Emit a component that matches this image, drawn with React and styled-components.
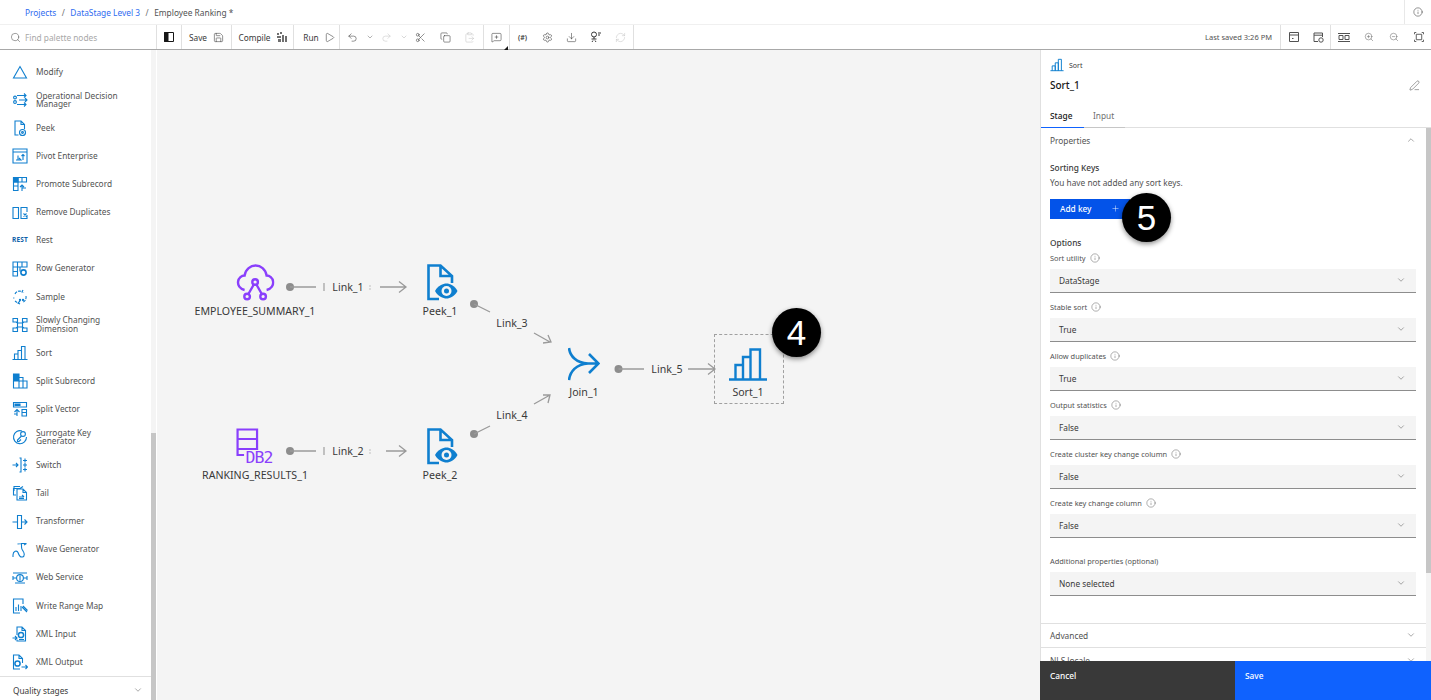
import React from 'react';
import styled, { createGlobalStyle } from 'styled-components';
import {
  Search, Save, Play, Undo2, Redo2, ChevronDown, ChevronUp, Scissors, Copy, ClipboardPaste,
  MessageSquarePlus, Settings, Download, RefreshCw, ZoomIn, ZoomOut, Info, PenLine, Plus,
} from 'lucide-react';

const GlobalStyle = createGlobalStyle`
  html, body { margin: 0; padding: 0; background: #fff; }
  body { font-family: "Noto Sans", Roboto, "Liberation Sans", sans-serif; color: #393939; }
`;

const Page = styled.div`
  position: relative;
  width: 1431px;
  height: 700px;
  overflow: hidden;
  display: flex;
  flex-direction: column;
`;

const TopBar = styled.div`
  height: 25px;
  box-sizing: border-box;
  display: flex;
  align-items: center;
  justify-content: space-between;
  padding-left: 25px;
  border-bottom: 1px solid #f0f0f0;
  flex: none;
`;
const Crumbs = styled.div`
  display: flex;
  gap: 5.5px;
  font-size: 8.35px;
  color: #525252;
`;
const CrumbLink = styled.span`color: #2f6bf0;`;
const CrumbSep = styled.span`color: #6f6f6f;`;
const InfoCell = styled.div`
  width: 26px;
  height: 24px;
  border-left: 1px solid #e8e8e8;
  display: flex;
  align-items: center;
  justify-content: center;
  color: #393939;
`;

const Toolbar = styled.div`
  height: 25px;
  box-sizing: border-box;
  flex: none;
  display: flex;
  align-items: stretch;
  border-bottom: 1px solid #a8a8a8;
  font-size: 8.3px;
`;
const SearchBox = styled.div`
  width: 157px;
  box-sizing: border-box;
  display: flex;
  align-items: center;
  gap: 4px;
  padding-left: 10px;
  border-right: 1px solid #e0e0e0;
  color: #a8a8a8;
  svg { color: #525252; }
`;
const ToolGroup = styled.div`
  display: flex;
  align-items: center;
  box-sizing: border-box;
  width: ${(props) => props.$width}px;
  border-right: ${(props) => (props.$open ? 'none' : '1px solid #e0e0e0')};
  border-left: ${(props) => (props.$lead ? '1px solid #e0e0e0' : 'none')};
`;
const ToolText = styled.div`
  display: flex;
  align-items: center;
  justify-content: center;
  box-sizing: border-box;
  gap: ${(props) => props.$gap || 6}px;
  padding-left: ${(props) => props.$pad || 0}px;
  width: 100%;
  color: #393939;
`;
const ToolIcon = styled.div`
  position: relative;
  width: ${(props) => props.$width || 24.5}px;
  flex: none;
  display: flex;
  align-items: center;
  justify-content: center;
  color: ${(props) => (props.$off ? '#c6c6c6' : '#393939')};
`;
const VarsMark = styled.span`
  font-size: 7px;
  font-weight: 600;
`;
const CornerMark = styled.span`
  position: absolute;
  right: 1px;
  bottom: -7px;
  width: 0;
  height: 0;
  border-left: 4px solid transparent;
  border-bottom: 4px solid #161616;
`;
const Spacer = styled.div`flex: 1;`;
const SavedText = styled.div`
  display: flex;
  align-items: center;
  padding-right: 8px;
  font-size: 7.5px;
  color: #525252;
`;

const Main = styled.div`
  flex: 1;
  min-height: 0;
  display: flex;
`;

const Palette = styled.div`
  width: 157px;
  flex: none;
  display: flex;
`;
const PaletteColumn = styled.div`
  width: 151px;
  display: flex;
  flex-direction: column;
`;
const PaletteList = styled.div`
  flex: 1;
  min-height: 0;
  padding-top: 8px;
  overflow: hidden;
`;
const PaletteItem = styled.div`
  height: 28.1px;
  display: flex;
  align-items: center;
  gap: 8px;
  padding-left: 12px;
  font-size: 8.3px;
  line-height: 8.5px;
  color: #525252;
  svg { flex: none; }
`;
const RestMark = styled.span`
  width: 20px;
  margin-right: -4px;
  flex: none;
  font-size: 6.5px;
  font-weight: 700;
  letter-spacing: 0.2px;
  color: #0f5fa8;
`;
const PaletteFooter = styled.div`
  height: 24px;
  flex: none;
  box-sizing: border-box;
  border-top: 1px solid #e0e0e0;
  display: flex;
  align-items: center;
  justify-content: space-between;
  padding: 3px 8px 0 13px;
  font-size: 8.3px;
  color: #393939;
`;
const ScrollTrack = styled.div`
  width: 5px;
  flex: none;
  background: #f4f4f4;
  display: flex;
  flex-direction: column;
  justify-content: ${(props) => (props.$end ? 'flex-end' : 'flex-start')};
`;
const ScrollThumb = styled.div`
  height: ${(props) => props.$height}px;
  background: #c6c6c6;
`;

const Canvas = styled.div`
  position: relative;
  flex: 1;
  background: #f4f4f4;
`;
const LinkLayer = styled.svg`
  position: absolute;
  inset: 0;
  width: 100%;
  height: 100%;
`;
const StageNode = styled.div`
  position: absolute;
  left: ${(props) => props.$x}px;
  top: ${(props) => props.$y}px;
  transform: translateX(-50%);
  display: flex;
  flex-direction: column;
  align-items: center;
  gap: ${(props) => props.$gap || 3}px;
  font-size: 10.6px;
  line-height: 14px;
  white-space: nowrap;
  color: #393939;
`;
const LinkLabel = styled.div`
  position: absolute;
  left: ${(props) => props.$x}px;
  top: ${(props) => props.$y}px;
  transform: translate(-50%, -50%);
  font-size: 10.6px;
  white-space: nowrap;
  color: #393939;
`;
const Selection = styled.div`
  position: absolute;
  left: 557px;
  top: 284px;
  width: 70px;
  height: 70px;
  box-sizing: border-box;
  border: 1px dashed #a0a0a0;
`;
const Badge = styled.div`
  position: absolute;
  left: ${(props) => props.$x}px;
  top: ${(props) => props.$y}px;
  width: 49px;
  height: 49px;
  border-radius: 50%;
  background: #000;
  color: #fff;
  display: flex;
  align-items: center;
  justify-content: center;
  font-family: "Liberation Sans", sans-serif;
  font-size: 35px;
  box-shadow: 0 2px 5px rgba(0, 0, 0, 0.45);
`;

const Inspector = styled.div`
  width: 391px;
  flex: none;
  box-sizing: border-box;
  border-left: 1px solid #e0e0e0;
  display: flex;
  flex-direction: column;
  background: #fff;
`;
const InspectorHead = styled.div`
  height: 53px;
  flex: none;
  box-sizing: border-box;
  padding: 8px 11px 0 9px;
`;
const KindRow = styled.div`
  display: flex;
  align-items: center;
  gap: 5px;
  font-size: 7px;
  color: #393939;
`;
const NameRow = styled.div`
  display: flex;
  align-items: center;
  justify-content: space-between;
  margin-top: 6px;
  font-size: 10px;
  font-weight: 500;
  color: #161616;
  svg { color: #525252; }
`;
const Tabs = styled.div`
  height: 24px;
  flex: none;
  display: flex;
  border-bottom: 1px solid #e0e0e0;
`;
const Tab = styled.div`
  width: ${(props) => props.$width}px;
  box-sizing: border-box;
  margin-bottom: -1px;
  display: flex;
  align-items: center;
  padding-left: ${(props) => props.$pad}px;
  font-size: 8.3px;
  font-weight: ${(props) => (props.$active ? 500 : 400)};
  color: ${(props) => (props.$active ? '#161616' : '#6f6f6f')};
  border-bottom: 1px solid ${(props) => (props.$active ? '#0f62fe' : '#c6c6c6')};
`;
const InspectorBody = styled.div`
  flex: 1;
  min-height: 0;
  display: flex;
  overflow: hidden;
`;
const BodyContent = styled.div`
  flex: 1;
  min-width: 0;
`;
const AccordionHead = styled.div`
  height: 24.5px;
  box-sizing: border-box;
  display: flex;
  align-items: center;
  justify-content: space-between;
  padding: 0 10px 0 9px;
  font-size: 8.3px;
  color: #525252;
  border-bottom: ${(props) => (props.$line ? '1px solid #e0e0e0' : 'none')};
  svg { color: #525252; }
`;
const PropertyPane = styled.div`
  padding: 9px 10px 0 9px;
  height: 471px;
  box-sizing: border-box;
  border-bottom: 1px solid #e0e0e0;
`;
const GroupTitle = styled.div`
  font-size: 8.3px;
  font-weight: 500;
  line-height: 12px;
  color: #393939;
`;
const HelpText = styled.div`
  font-size: 8.3px;
  line-height: 12px;
  margin-top: 3px;
  color: #525252;
`;
const AddButton = styled.div`
  width: 80px;
  height: 20px;
  margin: 10px 0 18px;
  box-sizing: border-box;
  padding: 0 10px 0 10px;
  display: flex;
  align-items: center;
  justify-content: space-between;
  background: #0353e9;
  color: #fff;
  font-size: 8.3px;
  font-weight: 500;
`;
const Field = styled.div`
  margin-top: ${(props) => props.$gap || 0}px;
`;
const FieldLabel = styled.div`
  height: 12px;
  display: flex;
  align-items: center;
  gap: 4px;
  font-size: 7.4px;
  color: #525252;
  svg { color: #525252; }
`;
const SelectBox = styled.div`
  height: 24px;
  margin-top: 5px;
  box-sizing: border-box;
  padding: 0 10px 0 9px;
  display: flex;
  align-items: center;
  justify-content: space-between;
  background: #f4f4f4;
  border-bottom: 1px solid #8d8d8d;
  font-size: 8.3px;
  color: #393939;
  svg { color: #525252; }
`;
const ActionRow = styled.div`
  height: 39px;
  flex: none;
  display: flex;
  margin-left: -1px;
`;
const ActionButton = styled.div`
  flex: ${(props) => (props.$primary ? '1' : '0 0 195px')};
  box-sizing: border-box;
  padding: 9px 10px;
  font-size: 8.3px;
  font-weight: 500;
  color: #fff;
  background: ${(props) => (props.$primary ? '#0f62fe' : '#393939')};
`;

const BLUE = '#0f7fcf';

const Glyph = ({ size = 16, color = BLUE, width = 1.1, fill = 'none', view = 16, children }) => (
  <svg width={size} height={size} viewBox={`0 0 ${view} ${view}`} fill={fill} stroke={color} strokeWidth={width} strokeLinejoin="miter">
    {children}
  </svg>
);

const SortBars = (props) => (
  <Glyph {...props}>
    <path d="M0.5 14.5H15.5M2.5 14.5V9H6V14.5M6 14.5V5.5H9.5V14.5M9.5 14.5V1.5H13V14.5" />
  </Glyph>
);

const paletteIcons = {
  modify: <Glyph><path d="M1.5 14H14.5L8 2.5Z" /></Glyph>,
  odm: <Glyph><path d="M5 3.5H14M12 1.5L14 3.5L12 5.5M7 8H15M13 6L15 8L13 10M5 12.5H14M12 10.5L14 12.5L12 14.5" /><circle cx="3" cy="5.5" r="1.4" /><circle cx="3" cy="10" r="1.4" /></Glyph>,
  peek: <Glyph><path d="M6.5 15H3V1H9L12.5 4.5V9M9 1V4.5H12.5" /><circle cx="10.5" cy="12.5" r="3" /><circle cx="10.5" cy="12.5" r="0.9" /></Glyph>,
  pivot: <Glyph><path d="M1 1H15V15H1ZM1 4H15M6 12V7.5M4 12H9L7 10M11 12V6.5M9.5 8L11 6.5L12.5 8" /></Glyph>,
  promote: <Glyph><path d="M1.5 1.5H14.5V6H1.5ZM6 1.5V14.5H1.5V1.5M1.5 6H6M1.5 10H6M10 1.5V6M10 15V9M8 11L10 9L12 11M10 12H14" /><path d="M1.5 1.5H6V6H1.5Z" fill={BLUE} /></Glyph>,
  remove: <Glyph><path d="M1 2.5H6.5V13.5H1ZM15 7V2.5H9V13.5H15V10M11.5 8.5L14.5 11.5M14.5 8.5L11.5 11.5" /></Glyph>,
  row: <Glyph><path d="M1 1H15V6H1ZM5.5 1V6M10 1V6M1 6V15H5.5V6M1 10.5H5.5M8 10.5V6" /><circle cx="11.5" cy="11.5" r="2.6" strokeWidth="1.6" /></Glyph>,
  sample: <Glyph><path d="M3 5C4 2.5 7 1.5 9.5 2.5M14 7C14.5 10 13 12.5 10.5 13.5M5 13.5L3 12M1.8 8.5V9.5M11 1L10 3L12 3.5" strokeDasharray="3 1" /><path d="M8 12L6 14L8 15" /><circle cx="8" cy="11" r="0.6" /><circle cx="11" cy="11" r="0.6" /></Glyph>,
  slowly: <Glyph><path d="M1 1.5H5.5V5H1ZM10.5 1.5H15V5H10.5ZM1 11H5.5V14.5H1ZM10.5 11H15V14.5H10.5ZM5.5 6H10.5V10H5.5ZM4 5L5.5 6M12 5L10.5 6M4 11L5.5 10M12 11L10.5 10" /></Glyph>,
  sort: <SortBars />,
  splitSub: <Glyph><path d="M1.5 1H7V8H1.5Z" fill={BLUE} /><path d="M1.5 8V15H7V8H15V15H7M11 8V15M7 4.5H11V8" /></Glyph>,
  splitVec: <Glyph><path d="M1.5 1.5H14.5V6H1.5Z" /><path d="M3 3H8V4.5H3Z" fill={BLUE} /><path d="M5 15V9M2.5 11L5 8.5L7.5 11M5 13H2M10 8.5H14.5V15H10ZM10 11.5H14.5" /></Glyph>,
  surrogate: <Glyph><path d="M10 2A6.5 6.5 0 1 0 14.5 8" /><circle cx="11" cy="5" r="2.4" /><path d="M9.5 7L5.5 11V12.5H7L9 10.5" /></Glyph>,
  switchNode: <Glyph><path d="M0.5 8H6M4 6L6 8L4 10M7.5 1H9V15H7.5M11 3.5H15M13 1.5V5.5M11 8H15M13 6V10M11 12.5H15M13 10.5V14.5" /></Glyph>,
  tail: <Glyph><path d="M2 6V1.5H8M4 10H1.5V3.5H8L11 1.5M5 4H11L14.5 7.5V15H5ZM11 4V7.5H14.5M7 12H12M10 10L12 12M7 13.5H12" /></Glyph>,
  transformer: <Glyph><path d="M0.5 8H5M5.5 1.5H9.5V14.5H5.5ZM9.5 8H15M12.5 5.5L15 8L12.5 10.5" /></Glyph>,
  wave: <Glyph><path d="M1 15V13C1 9 5 8 6 10.5C7 13.5 8 15.5 10.5 15C13 14.5 12.5 11 11 9C10 8 9.5 7 9.5 5V1.5H14.5M12 3L14.5 1.5M5.5 2L9.5 1.5" /></Glyph>,
  web: <Glyph><path d="M1 3H15M3 13H13M1 6V10M15 6V10" /><circle cx="8" cy="8" r="3.4" /><path d="M8 5.5V10.5M1 8H4.5M11.5 8H15" /></Glyph>,
  range: <Glyph><path d="M8 15H1.5V1H11V6M4 13V9M6.5 13V6.5M9 13V8" /><path d="M10 9L15 14M11 8L15.5 12.5" /></Glyph>,
  xmlIn: <Glyph><path d="M5 9V1H10L13.5 4.5V15H5V13.5M10 1V4.5H13.5" /><circle cx="9" cy="9" r="2.6" strokeWidth="1.5" /><path d="M0.5 12H5M3 10L5 12L3 14M7 13.5H12" /></Glyph>,
  xmlOut: <Glyph><path d="M8 15H1.5V1H7L10.5 4.5V9M7 1V4.5H10.5" /><circle cx="5.5" cy="9.5" r="2.6" strokeWidth="1.5" /><path d="M9.5 13H15.5M13.5 11L15.5 13L13.5 15" /></Glyph>,
};

const paletteItems = [
  ['modify', 'Modify'],
  ['odm', <>Operational Decision<br />Manager</>],
  ['peek', 'Peek'],
  ['pivot', 'Pivot Enterprise'],
  ['promote', 'Promote Subrecord'],
  ['remove', 'Remove Duplicates'],
  ['rest', 'Rest'],
  ['row', 'Row Generator'],
  ['sample', 'Sample'],
  ['slowly', <>Slowly Changing<br />Dimension</>],
  ['sort', 'Sort'],
  ['splitSub', 'Split Subrecord'],
  ['splitVec', 'Split Vector'],
  ['surrogate', <>Surrogate Key<br />Generator</>],
  ['switchNode', 'Switch'],
  ['tail', 'Tail'],
  ['transformer', 'Transformer'],
  ['wave', 'Wave Generator'],
  ['web', 'Web Service'],
  ['range', 'Write Range Map'],
  ['xmlIn', 'XML Input'],
  ['xmlOut', 'XML Output'],
];

const fields = [
  ['Sort utility', 'DataStage'],
  ['Stable sort', 'True'],
  ['Allow duplicates', 'True'],
  ['Output statistics', 'False'],
  ['Create cluster key change column', 'False'],
  ['Create key change column', 'False'],
];

const ICON = { size: 11, strokeWidth: 1.2 };

// the extra room on the left keeps the sheet a little right of the label, as in the flow
const PeekIcon = () => (
  <svg width="36" height="37" viewBox="-4 0 36 37" fill="none">
    <path d="M13 35H2.5V1.5H14.5L26 12V19M14.5 1.5V12H26" stroke="#0f7fcf" strokeWidth="2.6" />
    <path d="M9 27C12 21.5 17 19.5 20.5 19.5C24 19.5 28.5 21.5 31.5 27C28.5 32.5 24 34.5 20.5 34.5C17 34.5 12 32.5 9 27Z" fill="#0f7fcf" />
    <circle cx="20.5" cy="27" r="5" fill="#f4f4f4" />
    <circle cx="20.5" cy="27" r="2.5" fill="#0f7fcf" />
  </svg>
);

const CloudIcon = () => (
  <svg width="40" height="37" viewBox="-2 0 40 37" fill="none" stroke="#8a3ffc" strokeWidth="2.4">
    <path d="M8 26C3 25 1 21 1.5 17.5C2 14 5 11.5 8 11.5C9 5 14 1.5 19 1.5C24 1.5 29 5 30 11.5C33 11.5 36 14 36.5 17.5C37 21 35 25 30 26" />
    <circle cx="18.5" cy="18" r="2.8" />
    <circle cx="10.5" cy="32.5" r="2.8" />
    <circle cx="26.5" cy="32.5" r="2.8" />
    <path d="M17.2 20.5L11.8 30M19.8 20.5L25.2 30" />
  </svg>
);

const Db2Icon = () => (
  <svg width="38" height="37" viewBox="0 0 38 37" fill="none" stroke="#8a3ffc" strokeWidth="2.2" overflow="visible">
    <path d="M8 27H1.5V1.5H21V21H1.5M1.5 11H21" />
    <text x="9.5" y="35" fontFamily="DejaVu Sans Mono, monospace" fontSize="16.5" fill="#8a3ffc" stroke="none" letterSpacing="-1">DB2</text>
  </svg>
);

const JoinIcon = () => (
  <svg width="32" height="34" viewBox="0 0 32 34" fill="none" stroke="#0f7fcf" strokeWidth="2.6">
    <path d="M1 1C2 9 8 16 20 16.5H30M1 33C2 25 8 17 20 16.5M21 7L30.5 16.5L21 26" />
  </svg>
);

const SortStageIcon = () => (
  <svg width="38" height="33" viewBox="0 0 38 33" fill="none" stroke="#0f7fcf" strokeWidth="2.4">
    <path d="M0 31.5H38M6.5 31.5V17H14V31.5M14 31.5V9H21.5V31.5M21.5 31.5V1.5H31V31.5" />
  </svg>
);

const App = () => (
  <Page>
    <GlobalStyle />
    <TopBar>
      <Crumbs>
        <CrumbLink>Projects</CrumbLink>
        <CrumbSep>/</CrumbSep>
        <CrumbLink>DataStage Level 3</CrumbLink>
        <CrumbSep>/</CrumbSep>
        <span>Employee Ranking *</span>
      </Crumbs>
      <InfoCell><Info size={10} strokeWidth={1.3} /></InfoCell>
    </TopBar>

    <Toolbar>
      <SearchBox><Search {...ICON} />Find palette nodes</SearchBox>
      <ToolGroup $width={25}>
        <ToolIcon>
          <svg width="10" height="10" viewBox="0 0 10 10" fill="none" stroke="#161616">
            <path d="M0.5 0.5H9.5V9.5H0.5Z" />
            <path d="M0.5 0.5H4V9.5H0.5Z" fill="#161616" />
          </svg>
        </ToolIcon>
      </ToolGroup>
      <ToolGroup $width={50}><ToolText>Save <Save {...ICON} /></ToolText></ToolGroup>
      <ToolGroup $width={62}>
        <ToolText>
          Compile
          <svg width="10" height="10" viewBox="0 0 10 10" fill="#6f6f6f">
            <path d="M0 1H2V3H0ZM3 0H5V2H3ZM0 4H4V6H0ZM1 7H4V10H1ZM5 3H7V10H5ZM8 4H10V10H8Z" />
          </svg>
        </ToolText>
      </ToolGroup>
      <ToolGroup $width={46}><ToolText $gap={5} $pad={5}>Run <Play {...ICON} /></ToolText></ToolGroup>
      <ToolGroup $width={144}>
        <ToolIcon $width={25}><Undo2 {...ICON} /></ToolIcon>
        <ToolIcon $width={9} $off><ChevronDown size={8} color="#8d8d8d" /></ToolIcon>
        <ToolIcon $width={25} $off><Redo2 {...ICON} /></ToolIcon>
        <ToolIcon $width={9} $off><ChevronDown size={8} /></ToolIcon>
        <ToolIcon $width={25}><Scissors {...ICON} /></ToolIcon>
        <ToolIcon><Copy {...ICON} /></ToolIcon>
        <ToolIcon $off><ClipboardPaste {...ICON} /></ToolIcon>
      </ToolGroup>
      <ToolGroup $width={26}>
        <ToolIcon $width={25}><MessageSquarePlus {...ICON} /><CornerMark /></ToolIcon>
      </ToolGroup>
      <ToolGroup $width={124}>
        <ToolIcon $width={25}><VarsMark>(#)</VarsMark></ToolIcon>
        <ToolIcon><Settings {...ICON} /></ToolIcon>
        <ToolIcon><Download {...ICON} /></ToolIcon>
        <ToolIcon>
          <svg width="12" height="12" viewBox="0 0 12 12" fill="none" stroke="#393939">
            <circle cx="4" cy="3.5" r="2.5" />
            <path d="M4 6V8M1.5 8H6.5M2 11L3 9.5M6 11L5 9.5M8 2H11M8 4H10" />
          </svg>
        </ToolIcon>
        <ToolIcon $off><RefreshCw {...ICON} /></ToolIcon>
      </ToolGroup>
      <Spacer />
      <SavedText>Last saved 3:26 PM</SavedText>
      <ToolGroup $width={51} $lead>
        <ToolIcon $width={25}>
          <svg width="10" height="10" viewBox="0 0 10 10" fill="none" stroke="#525252">
            <path d="M0.5 0.5H9.5V9.5H0.5ZM0.5 3H9.5M3 6.5H4.5" />
          </svg>
        </ToolIcon>
        <ToolIcon $width={25}>
          <svg width="11" height="11" viewBox="0 0 11 11" fill="none" stroke="#525252">
            <path d="M5 9.5H1V1H9.5V5M1 3.2H9.5" />
            <circle cx="8" cy="8" r="2.2" />
          </svg>
        </ToolIcon>
      </ToolGroup>
      <ToolGroup $width={100} $open>
        <ToolIcon $width={25}>
          <svg width="12" height="9" viewBox="0 0 12 9" fill="none" stroke="#525252">
            <path d="M0 0.5H12M0 8.5H12M1 2.5H5V6.5H1ZM7 2.5H11V6.5H7Z" />
          </svg>
        </ToolIcon>
        <ToolIcon $width={25}><ZoomIn size={10} strokeWidth={1.1} color="#525252" /></ToolIcon>
        <ToolIcon $width={25}><ZoomOut size={10} strokeWidth={1.1} color="#525252" /></ToolIcon>
        <ToolIcon $width={25}>
          <svg width="10" height="10" viewBox="0 0 11 11" fill="none" stroke="#525252">
            <path d="M2.5 2.5H8.5V8.5H2.5Z" />
            <path d="M0.5 2.5V0.5H2.5M8.5 0.5H10.5V2.5M10.5 8.5V10.5H8.5M2.5 10.5H0.5V8.5" />
          </svg>
        </ToolIcon>
      </ToolGroup>
    </Toolbar>

    <Main>
      <Palette>
        <PaletteColumn>
          <PaletteList>
            {paletteItems.map(([key, label]) => (
              <PaletteItem key={key}>
                {key === 'rest' ? <RestMark>REST</RestMark> : paletteIcons[key]}
                <span>{label}</span>
              </PaletteItem>
            ))}
          </PaletteList>
          <PaletteFooter>Quality stages <ChevronDown size={10} strokeWidth={1.2} color="#525252" /></PaletteFooter>
        </PaletteColumn>
        <ScrollTrack $end><ScrollThumb $height={267} /></ScrollTrack>
      </Palette>

      <Canvas>
        <LinkLayer fill="none" stroke="#9a9a9a" strokeWidth="1.3">
          <g fill="#8d8d8d" stroke="none">
            <circle cx="133" cy="237" r="4" />
            <circle cx="133" cy="401" r="4" />
            <circle cx="317" cy="254" r="4" />
            <circle cx="317" cy="384" r="4" />
            <circle cx="461.5" cy="319" r="4" />
          </g>
          <path d="M133 237H159M223 237H249M242 231.5L249 237L242 242.5" />
          <path d="M133 401H159M229 401H249M242 395.5L249 401L242 406.5" />
          <path d="M317 254L333 262M377 283L393 292M386 293L394 292L391 285" />
          <path d="M317 384L333 376M377 354L393 345M386 345L393 345L391 353" />
          <path d="M461.5 319H487M531 319H558M551 313.5L558 319L551 324.5" />
          <path d="M167 233V241M213 235.5V236.5M213 238.5V239.5M167 397V405M213 399.5V400.5M213 402.5V403.5" strokeWidth="1" stroke="#8d8d8d" />
        </LinkLayer>

        <LinkLabel $x={191} $y={237}>Link_1</LinkLabel>
        <LinkLabel $x={191} $y={401}>Link_2</LinkLabel>
        <LinkLabel $x={355} $y={273}>Link_3</LinkLabel>
        <LinkLabel $x={355} $y={365}>Link_4</LinkLabel>
        <LinkLabel $x={510} $y={319}>Link_5</LinkLabel>

        <StageNode $x={98} $y={214}><CloudIcon />EMPLOYEE_SUMMARY_1</StageNode>
        <StageNode $x={98} $y={378}><Db2Icon />RANKING_RESULTS_1</StageNode>
        <StageNode $x={283} $y={214}><PeekIcon />Peek_1</StageNode>
        <StageNode $x={283} $y={378}><PeekIcon />Peek_2</StageNode>
        <StageNode $x={427} $y={297} $gap={4}><JoinIcon />Join_1</StageNode>
        <Selection />
        <StageNode $x={591} $y={298} $gap={4}><SortStageIcon />Sort_1</StageNode>
      </Canvas>

      <Inspector>
        <InspectorHead>
          <KindRow><SortBars size={14} />Sort</KindRow>
          <NameRow>Sort_1 <PenLine size={11} strokeWidth={1.2} /></NameRow>
        </InspectorHead>
        <Tabs>
          <Tab $width={43} $pad={9} $active>Stage</Tab>
          <Tab $width={41} $pad={9}>Input</Tab>
        </Tabs>
        <InspectorBody>
          <BodyContent>
            <AccordionHead>Properties <ChevronUp size={10} strokeWidth={1.2} /></AccordionHead>
            <PropertyPane>
              <GroupTitle>Sorting Keys</GroupTitle>
              <HelpText>You have not added any sort keys.</HelpText>
              <AddButton>Add key <Plus size={9} strokeWidth={1.2} /></AddButton>
              <GroupTitle>Options</GroupTitle>
              {fields.map(([label, value], index) => (
                <Field key={label} $gap={index === 0 ? 3 : 8}>
                  <FieldLabel>{label} <Info size={10} strokeWidth={1.1} /></FieldLabel>
                  <SelectBox>{value} <ChevronDown size={10} strokeWidth={1.2} /></SelectBox>
                </Field>
              ))}
              <Field $gap={17}>
                <FieldLabel>Additional properties (optional)</FieldLabel>
                <SelectBox>None selected <ChevronDown size={10} strokeWidth={1.2} /></SelectBox>
              </Field>
            </PropertyPane>
            <AccordionHead $line>Advanced <ChevronDown size={10} strokeWidth={1.2} /></AccordionHead>
            <AccordionHead>NLS locale <ChevronDown size={10} strokeWidth={1.2} /></AccordionHead>
          </BodyContent>
          <ScrollTrack><ScrollThumb $height={445} /></ScrollTrack>
        </InspectorBody>
        <ActionRow>
          <ActionButton>Cancel</ActionButton>
          <ActionButton $primary>Save</ActionButton>
        </ActionRow>
      </Inspector>
    </Main>

    <Badge $x={772} $y={308}>4</Badge>
    <Badge $x={1122} $y={193}>5</Badge>
  </Page>
);

export default App;
